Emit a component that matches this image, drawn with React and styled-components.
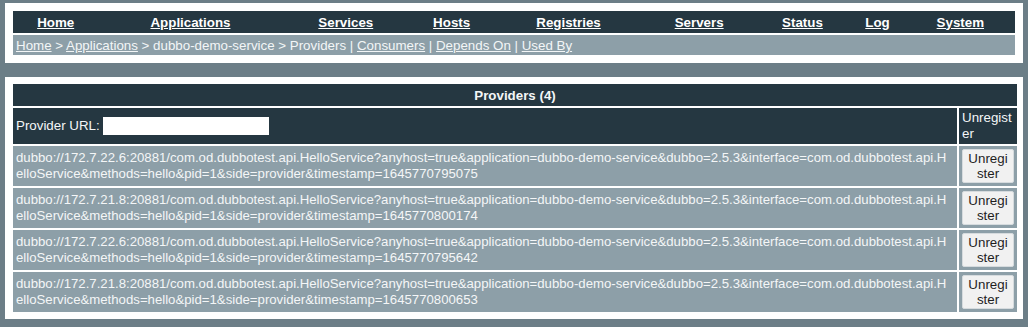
import styled, { createGlobalStyle } from "styled-components";

const GlobalStyle = createGlobalStyle`
  body {
    margin: 0;
    background: #6c7e87;
    font-family: "Liberation Sans", Arial, sans-serif;
    font-size: 13.33px;
  }
`;

const Page = styled.div`
  padding: 3px 5px 0 5px;
  display: flex;
  flex-direction: column;
  gap: 14px;
  width: 1018px;
`;

const Panel = styled.div`
  background: #ffffff;
  padding: ${(p) => p.$pad || "8px"};
  display: flex;
  flex-direction: column;
  gap: 2px;
`;

const NavTable = styled.table`
  width: 100%;
  border-collapse: collapse;
  background: #253741;
  height: 22px;
`;

const NavCell = styled.td`
  text-align: center;
  padding: 0;
`;

const NavLink = styled.a`
  color: #ffffff;
  font-weight: bold;
  text-decoration: underline;
  cursor: pointer;
`;

const Crumbs = styled.div`
  background: #8d9fa8;
  height: 20px;
  line-height: 21px;
  padding: 0 3px;
  color: #f3f6f7;
`;

const CrumbLink = styled.a`
  color: #f3f6f7;
  text-decoration: underline;
  cursor: pointer;
`;

const List = styled.table`
  width: 100%;
  border-spacing: 2px;
  color: #f4f6f7;
  font-size: 13.33px;
`;

const HeadCell = styled.th`
  background: #253741;
  height: 22px;
  box-sizing: border-box;
  padding: 0 3px;
  font-weight: bold;
  text-align: center;
`;

const Cell = styled.td`
  background: ${(p) => (p.$dark ? "#253741" : "#8d9fa8")};
  height: ${(p) => p.$h || "auto"};
  box-sizing: border-box;
  padding: 2px 3px;
  line-height: 16px;
  text-align: ${(p) => p.$align || "left"};
  vertical-align: middle;
  word-break: break-all;
  width: ${(p) => p.$w || "auto"};
`;

const UrlCell = styled(Cell)`
  font-size: 13.2px;
  padding-right: 6px;
`;

const UrlInput = styled.input`
  width: 166px;
  height: 18px;
  box-sizing: border-box;
  border: none;
  padding: 1px 2px;
  vertical-align: middle;
  font-size: 13.33px;
`;

const Button = styled.button`
  width: 52px;
  height: 34px;
  padding: 0 3px;
  background: #f1f1f1;
  border: 1px solid #d6dbde;
  border-radius: 2px;
  color: #1e1e1e;
  font-family: "Liberation Sans", Arial, sans-serif;
  font-size: 13.33px;
  line-height: 15px;
  word-break: break-all;
  cursor: pointer;
`;

const nav = [
  "Home",
  "Applications",
  "Services",
  "Hosts",
  "Registries",
  "Servers",
  "Status",
  "Log",
  "System",
];

const providers = [
  ["172.7.22.6", "1645770795075"],
  ["172.7.21.8", "1645770800174"],
  ["172.7.22.6", "1645770795642"],
  ["172.7.21.8", "1645770800653"],
];

const url = (ip, ts) =>
  `dubbo://${ip}:20881/com.od.dubbotest.api.HelloService?anyhost=true&application=dubbo-demo-service&dubbo=2.5.3&interface=com.od.dubbotest.api.HelloService&methods=hello&pid=1&side=provider&timestamp=${ts}`;

export default function App() {
  return (
    <>
      <GlobalStyle />
      <Page>
        <Panel>
          <NavTable>
            <tbody>
              <tr>
                {nav.map((n) => (
                  <NavCell key={n}>
                    <NavLink>{n}</NavLink>
                  </NavCell>
                ))}
              </tr>
            </tbody>
          </NavTable>
          <Crumbs>
            <CrumbLink>Home</CrumbLink> &gt; <CrumbLink>Applications</CrumbLink>{" "}
            &gt; dubbo-demo-service &gt; Providers |{" "}
            <CrumbLink>Consumers</CrumbLink> | <CrumbLink>Depends On</CrumbLink>{" "}
            | <CrumbLink>Used By</CrumbLink>
          </Crumbs>
        </Panel>
        <Panel $pad="5px 4px 5px 6px">
          <List>
            <thead>
              <tr>
                <HeadCell colSpan={2}>Providers (4)</HeadCell>
              </tr>
            </thead>
            <tbody>
              <tr>
                <Cell $dark $h="36px">
                  Provider URL: <UrlInput type="text" />
                </Cell>
                <Cell $dark $w="54px">
                  Unregister
                </Cell>
              </tr>
              {providers.map(([ip, ts]) => (
                <tr key={ts}>
                  <UrlCell $h="40px">{url(ip, ts)}</UrlCell>
                  <Cell $align="center" $w="54px">
                    <Button>Unregister</Button>
                  </Cell>
                </tr>
              ))}
            </tbody>
          </List>
        </Panel>
      </Page>
    </>
  );
}
